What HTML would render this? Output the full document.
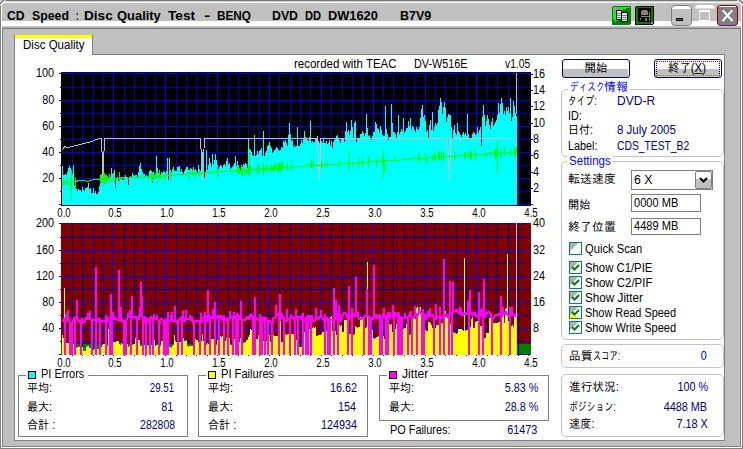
<!DOCTYPE html>
<html lang="ja"><head><meta charset="utf-8"><title>CD Speed : Disc Quality Test</title>
<style>
html,body{margin:0;padding:0}
body{width:743px;height:449px;position:relative;overflow:hidden;background:#c0c0c0;font-family:"Liberation Sans","IPAGothic",sans-serif;font-size:12px}
.a{position:absolute}
.t{position:absolute;white-space:pre;line-height:14px;height:14px;font-size:12px}
.gb{position:absolute;border:1px solid #c4c4c4;border-radius:5px;box-sizing:border-box}
.sb{position:absolute;border:1px solid #808080;box-sizing:border-box}
.wh{position:absolute;background:#fff}
.inp{position:absolute;border:1px solid #808080;box-sizing:border-box;background:#fff}
.cb{position:absolute;width:13px;height:13px;box-sizing:border-box;border:1px solid #008080;background:linear-gradient(135deg,#b0b0b0 0,#b0b0b0 36%,#fff 37%)}
.btn{position:absolute;box-sizing:border-box;border:1px solid #000080;border-radius:3px;background:linear-gradient(90deg,rgba(255,255,255,0) 0,rgba(255,255,255,0) 65px,#fff 65px),linear-gradient(#fff 0,#fff 9px,#c0c0c0 9px,#c0c0c0 100%)}
</style></head><body>
<!-- window frame -->
<div class="a" style="left:0;top:0;width:743px;height:449px;background:#808080"></div>
<div class="a" style="left:1px;top:1px;width:741px;height:447px;background:#fff"></div>
<div class="a" style="left:2px;top:28px;width:739px;height:419px;background:#808080"></div>
<div class="a" style="left:3px;top:3px;width:737px;height:443px;background:#c0c0c0"></div>
<div class="a" style="left:2px;top:3px;width:739px;height:18px;background:#c0c0c0"></div>
<div class="a" style="left:0;top:0;width:743px;height:1px;background:#787878"></div>
<div class="a" style="left:1px;top:1px;width:741px;height:1px;background:#d0d0d0"></div>
<!-- title bar bottom stripes -->
<div class="a" style="left:1px;top:21px;width:741px;height:5px;background:#fff"></div>
<div class="a" style="left:2px;top:26px;width:739px;height:1px;background:#c8c8c8"></div>
<div class="a" style="left:2px;top:27px;width:739px;height:1px;background:#b0b0b0"></div>
<div class="a" style="left:2px;top:28px;width:739px;height:1px;background:#787878"></div>
<svg class="a" style="left:0;top:0" width="6" height="6" viewBox="0 0 6 6"><path d="M0 0H5L0 5Z" fill="#d8d8d8"/><path d="M-0.5 4.5L4.5 -0.5" stroke="#707070" stroke-width="1.4" fill="none"/><path d="M0.5 5.5L5.5 0.5" stroke="#fff" stroke-width="1.4" fill="none"/></svg>
<svg class="a" style="left:737px;top:0" width="6" height="6" viewBox="0 0 6 6"><path d="M6 0H1L6 5Z" fill="#d8d8d8"/><path d="M6.5 4.5L1.5 -0.5" stroke="#707070" stroke-width="1.4" fill="none"/><path d="M5.5 5.5L0.5 0.5" stroke="#fff" stroke-width="1.4" fill="none"/></svg>
<!-- title icons -->
<svg class="a" style="left:612px;top:6px" width="19" height="19" viewBox="0 0 19 19" shape-rendering="crispEdges">
<rect x="0" y="0" width="19" height="19" rx="2" fill="#008000"/>
<path d="M1 1H18V2H14V3H11V4H5V15H4V16H3V14H1Z" fill="#00ff00"/>
<rect x="1" y="1" width="3" height="3" fill="#a0a0a0"/><rect x="4" y="2" width="7" height="1" fill="#909090"/><rect x="2" y="4" width="1" height="4" fill="#909090"/>
<rect x="4" y="4" width="6" height="10" fill="#000"/><rect x="5" y="5" width="4" height="8" fill="#e8e8e8"/>
<rect x="5" y="7" width="4" height="1" fill="#808080"/><rect x="5" y="9" width="4" height="1" fill="#808080"/><rect x="5" y="11" width="4" height="1" fill="#808080"/>
<rect x="9" y="6" width="7" height="10" fill="#000"/><rect x="10" y="7" width="5" height="8" fill="#e8e8e8"/>
<rect x="10" y="9" width="5" height="1" fill="#808080"/><rect x="10" y="11" width="5" height="1" fill="#808080"/><rect x="10" y="13" width="5" height="1" fill="#808080"/>
</svg>
<svg class="a" style="left:635px;top:6px" width="19" height="19" viewBox="0 0 19 19" shape-rendering="crispEdges">
<rect x="0" y="0" width="19" height="19" rx="2" fill="#000"/>
<rect x="1" y="1" width="17" height="17" fill="#008000"/>
<rect x="3" y="2" width="13" height="14" fill="#000"/>
<path d="M7 4H12V5H13V9H6V5H7Z" fill="#808080"/>
<rect x="6" y="10" width="8" height="1" fill="#808080"/><rect x="14" y="6" width="1" height="9" fill="#808080"/>
<rect x="5" y="12" width="1" height="2" fill="#808080"/><rect x="10" y="12" width="2" height="3" fill="#808080"/>
<rect x="16" y="16" width="2" height="2" fill="#909090"/>
</svg>
<!-- min -->
<div class="a" style="left:671px;top:5px;width:21px;height:21px;box-sizing:border-box;border:1px solid #808080;border-radius:4px;background:linear-gradient(#fff 0,#fff 3px,#c0c0c0 3.5px,#c0c0c0 100%)"></div>
<div class="a" style="left:676px;top:18px;width:7px;height:3px;box-sizing:border-box;border:1px solid #000;background:#606060"></div>
<!-- max (disabled) -->
<div class="a" style="left:695px;top:5px;width:20px;height:21px;box-sizing:border-box;border-radius:4px;background:linear-gradient(#fff 0,#fff 3px,#c0c0c0 4px,#c0c0c0 16px,#fff 16px,#fff 100%)"></div>
<div class="a" style="left:699px;top:10px;width:11px;height:11px;box-sizing:border-box;border:1px solid #fff;border-top:2px solid #fff;background:#c0c0c0"></div>
<!-- close -->
<div class="a" style="left:717px;top:5px;width:21px;height:21px;box-sizing:border-box;border:1px solid #800000;border-bottom:1px solid #800080;border-radius:4px;background:#808080"></div>
<div class="a" style="left:719px;top:6px;width:17px;height:1px;background:#fff"></div>
<svg class="a" style="left:717px;top:5px" width="21" height="21" viewBox="0 0 21 21"><path d="M5 4 L15 15 M16 4 L6 15" stroke="#202020" stroke-width="1" fill="none"/><path d="M5.5 5 L15.5 16 M15.5 5 L5.5 16" stroke="#fff" stroke-width="2" fill="none"/></svg>


<!-- tab panel -->
<div class="a" style="left:14px;top:54px;width:711px;height:387px;box-sizing:border-box;border:1px solid #808080;background:#fff"></div>
<div class="a" style="left:14px;top:35px;width:79px;height:20px;box-sizing:border-box;border-left:1px solid #808080;border-right:1px solid #808080;background:#fff"></div>
<div class="a" style="left:15px;top:35px;width:77px;height:3px;background:#ffff00"></div>
<!-- charts -->
<svg class="a" style="left:0;top:0" width="743" height="449" viewBox="0 0 743 449" shape-rendering="crispEdges">
<path fill="#000" d="M61 72h470v134h-470z"/>
<path fill="#0000ff" d="M62 73h468v1h-468z"/>
<path fill="#0000b8" d="M62 87h468v1h-468z"/>
<path fill="#0000ff" d="M62 100h468v1h-468z"/>
<path fill="#0000b8" d="M62 113h468v1h-468z"/>
<path fill="#0000ff" d="M62 126h468v1h-468z"/>
<path fill="#0000b8" d="M62 139h468v1h-468z"/>
<path fill="#0000ff" d="M62 152h468v1h-468z"/>
<path fill="#0000b8" d="M62 165h468v1h-468z"/>
<path fill="#0000ff" d="M62 178h468v1h-468z"/>
<path fill="#0000b8" d="M62 191h468v1h-468z"/>
<path fill="#0000ff" d="M62 204h468v1h-468z"/>
<path fill="#0000b8" d="M72 73h1v132h-1zM82 73h1v132h-1zM93 73h1v132h-1zM103 73h1v132h-1z"/>
<path fill="#0000ff" d="M113 73h1v132h-1z"/>
<path fill="#0000b8" d="M124 73h1v132h-1zM134 73h1v132h-1zM145 73h1v132h-1zM155 73h1v132h-1z"/>
<path fill="#0000ff" d="M165 73h1v132h-1z"/>
<path fill="#0000b8" d="M176 73h1v132h-1zM186 73h1v132h-1zM196 73h1v132h-1zM207 73h1v132h-1z"/>
<path fill="#0000ff" d="M217 73h1v132h-1z"/>
<path fill="#0000b8" d="M228 73h1v132h-1zM238 73h1v132h-1zM248 73h1v132h-1zM259 73h1v132h-1z"/>
<path fill="#0000ff" d="M269 73h1v132h-1z"/>
<path fill="#0000b8" d="M279 73h1v132h-1zM290 73h1v132h-1zM300 73h1v132h-1zM310 73h1v132h-1z"/>
<path fill="#0000ff" d="M321 73h1v132h-1z"/>
<path fill="#0000b8" d="M331 73h1v132h-1zM342 73h1v132h-1zM352 73h1v132h-1zM362 73h1v132h-1z"/>
<path fill="#0000ff" d="M373 73h1v132h-1z"/>
<path fill="#0000b8" d="M383 73h1v132h-1zM393 73h1v132h-1zM404 73h1v132h-1zM414 73h1v132h-1z"/>
<path fill="#0000ff" d="M425 73h1v132h-1z"/>
<path fill="#0000b8" d="M435 73h1v132h-1zM445 73h1v132h-1zM456 73h1v132h-1zM466 73h1v132h-1z"/>
<path fill="#0000ff" d="M476 73h1v132h-1z"/>
<path fill="#0000b8" d="M487 73h1v132h-1zM497 73h1v132h-1zM508 73h1v132h-1zM518 73h1v132h-1z"/>
<path fill="#0000ff" d="M59 73h2v1h-2zM60 87h1v1h-1zM59 100h2v1h-2zM60 113h1v1h-1zM59 126h2v1h-2zM60 139h1v1h-1zM59 152h2v1h-2zM60 165h1v1h-1zM59 178h2v1h-2zM60 191h1v1h-1zM59 204h2v1h-2zM529 204h4v1h-4zM529 196h2v1h-2zM529 188h4v1h-4zM529 180h2v1h-2zM529 172h4v1h-4zM529 164h2v1h-2zM529 155h4v1h-4zM529 147h2v1h-2zM529 139h4v1h-4zM529 131h2v1h-2zM529 123h4v1h-4zM529 114h2v1h-2zM529 106h4v1h-4zM529 98h2v1h-2zM529 90h4v1h-4zM529 82h2v1h-2zM529 74h4v1h-4zM72 205h1v1h-1zM82 205h1v1h-1zM93 205h1v1h-1zM103 205h1v1h-1zM113 205h1v1h-1zM124 205h1v1h-1zM134 205h1v1h-1zM145 205h1v1h-1zM155 205h1v1h-1zM165 205h1v1h-1zM176 205h1v1h-1zM186 205h1v1h-1zM196 205h1v1h-1zM207 205h1v1h-1zM217 205h1v1h-1zM228 205h1v1h-1zM238 205h1v1h-1zM248 205h1v1h-1zM259 205h1v1h-1zM269 205h1v1h-1zM279 205h1v1h-1zM290 205h1v1h-1zM300 205h1v1h-1zM310 205h1v1h-1zM321 205h1v1h-1zM331 205h1v1h-1zM342 205h1v1h-1zM352 205h1v1h-1zM362 205h1v1h-1zM373 205h1v1h-1zM383 205h1v1h-1zM393 205h1v1h-1zM404 205h1v1h-1zM414 205h1v1h-1zM425 205h1v1h-1zM435 205h1v1h-1zM445 205h1v1h-1zM456 205h1v1h-1zM466 205h1v1h-1zM476 205h1v1h-1zM487 205h1v1h-1zM497 205h1v1h-1zM508 205h1v1h-1zM518 205h1v1h-1zM528 205h1v1h-1z"/>
<path d="M62,205V166H63V175H64V175H65V174H66V175H67V172H68V168H69V166H70V168H71V172H72V174H73V165H74V186H75V188H76V189H77V191H78V189H79V190H80V190H81V192H82V187H83V190H84V191H85V188H86V188H87V187H88V183H89V189H90V188H91V193H92V193H93V188H94V193H95V191H96V194H97V194H98V192H99V186H100V183H101V179H102V178H103V180H104V178H105V177H106V179H107V179H108V178H109V177H110V177H111V168H112V174H113V173H114V170H115V188H116V179H117V177H118V181H119V177H120V179H121V178H122V180H123V180H124V177H125V175H126V177H127V177H128V185H129V177H130V176H131V177H132V173H133V175H134V176H135V175H136V175H137V178H138V172H139V166H140V163H141V169H142V172H143V174H144V174H145V177H146V175H147V177H148V178H149V171H150V170H151V171H152V183H153V172H154V175H155V176H156V156H157V168H158V173H159V170H160V175H161V174H162V173H163V171H164V172H165V174H166V171H167V158H168V180H169V158H170V170H171V172H172V169H173V167H174V171H175V171H176V171H177V167H178V167H179V166H180V172H181V169H182V172H183V174H184V171H185V169H186V167H187V167H188V170H189V170H190V168H191V169H192V170H193V167H194V171H195V169H196V171H197V173H198V165H199V172H200V171H201V168H202V152H203V169H204V178H205V173H206V150H207V170H208V165H209V158H210V163H211V167H212V154H213V164H214V160H215V154H216V160H217V165H218V169H219V167H220V165H221V166H222V168H223V165H224V164H225V166H226V161H227V158H228V165H229V163H230V169H231V168H232V167H233V165H234V163H235V156H236V166H237V161H238V166H239V170H240V170H241V166H242V167H243V164H244V165H245V163H246V164H247V168H248V138H249V149H250V150H251V152H252V155H253V156H254V135H255V156H256V155H257V151H258V154H259V151H260V150H261V148H262V156H263V131H264V156H265V153H266V151H267V146H268V145H269V142H270V146H271V148H272V153H273V152H274V150H275V149H276V147H277V148H278V150H279V151H280V150H281V147H282V148H283V141H284V142H285V140H286V143H287V146H288V135H289V123H290V134H291V141H292V140H293V147H294V145H295V147H296V146H297V127H298V146H299V146H300V144H301V140H302V143H303V139H304V131H305V137H306V139H307V140H308V141H309V137H310V121H311V142H312V141H313V143H314V142H315V139H316V139H317V136H318V141H319V143H320V141H321V141H322V143H323V139H324V143H325V143H326V141H327V144H328V143H329V140H330V146H331V141H332V148H333V142H334V140H335V138H336V136H337V135H338V139H339V140H340V143H341V138H342V138H343V139H344V142H345V131H346V122H347V132H348V130H349V135H350V131H351V120H352V127H353V139H354V123H355V121H356V142H357V139H358V138H359V139H360V134H361V134H362V131H363V133H364V136H365V133H366V114H367V128H368V136H369V135H370V138H371V140H372V136H373V132H374V132H375V122H376V124H377V128H378V129H379V133H380V126H381V130H382V135H383V136H384V136H385V106H386V129H387V134H388V140H389V137H390V137H391V104H392V123H393V132H394V132H395V134H396V138H397V132H398V115H399V134H400V132H401V129H402V131H403V118H404V133H405V131H406V128H407V128H408V121H409V126H410V118H411V130H412V126H413V127H414V130H415V132H416V127H417V129H418V130H419V127H420V118H421V109H422V105H423V117H424V115H425V121H426V132H427V130H428V138H429V125H430V120H431V130H432V112H433V131H434V127H435V123H436V125H437V123H438V110H439V106H440V98H441V102H442V114H443V107H444V102H445V108H446V122H447V117H448V114H449V115H450V115H451V127H452V138H453V130H454V125H455V133H456V135H457V123H458V131H459V133H460V135H461V137H462V134H463V132H464V135H465V133H466V136H467V114H468V134H469V138H470V138H471V139H472V134H473V132H474V133H475V135H476V134H477V127H478V133H479V130H480V127H481V146H482V117H483V105H484V115H485V126H486V121H487V115H488V119H489V125H490V129H491V122H492V118H493V126H494V124H495V122H496V120H497V115H498V103H499V113H500V104H501V98H502V103H503V114H504V111H505V115H506V107H507V111H508V107H509V113H510V98H511V121H512V117H513V101H514V106H515V113H516V116H517V205Z" fill="#00ffff"/>
<path d="M62,150 L63,149 L64,147.5 L65,146.5 L66.5,147.5 L68,147.5 L72,146.5 L80,144.5 L90,142 L98,139 L101,138.5 L101.5,138.5 L103,178.5 L104.5,138.5 H200.5 L202.5,180 L204.5,138.5 H317.5 L319.5,180 L321,138.5 H447.5 L449.5,180 L451,138.5 H513" fill="none" stroke="#c0c0c0" stroke-width="1"/>
<path fill="#c0c0c0" d="M516 73h1v41h-1z"/>
<polyline points="62.5,182.0 63.5,182.1 64.5,182.2 65.5,182.6 66.5,182.6 67.5,182.8 68.5,182.5 69.5,182.4 70.5,182.1 71.5,181.5 72.5,181.5 73.5,181.3 74.5,181.4 75.5,181.4 76.5,181.3 77.5,181.1 78.5,180.5 79.5,180.6 80.5,180.4 81.5,180.1 82.5,180.2 83.5,180.4 84.5,180.7 85.5,180.9 86.5,181.1 87.5,181.2 88.5,181.1 89.5,180.6 90.5,180.6 91.5,180.1 92.5,179.9 93.5,179.8 94.5,179.8 95.5,179.9 96.5,179.9 97.5,179.8 98.5,179.7 99.5,179.6 100.5,179.7 101.5,179.6 102.5,179.3 103.5,179.3 104.5,179.0 105.5,178.9 106.5,178.6 107.5,178.5 108.5,178.6 109.5,178.3 110.5,178.2 111.5,178.3 112.5,178.2 113.5,178.1 114.5,178.2 115.5,178.4 116.5,178.5 117.5,178.1 118.5,178.1 119.5,178.0 120.5,177.8 121.5,177.6 122.5,177.7 123.5,178.0 124.5,178.0 125.5,178.1 126.5,178.2 127.5,178.2 128.5,178.1 129.5,177.8 130.5,177.8 131.5,177.9 132.5,177.9 133.5,177.9 134.5,177.5 135.5,177.5 136.5,177.3 137.5,177.3 138.5,177.1 139.5,177.1 140.5,177.1 141.5,177.3 142.5,177.5 143.5,177.2 144.5,177.0 145.5,176.8 146.5,177.0 147.5,176.7 148.5,176.3 149.5,176.2 150.5,176.2 151.5,176.4 152.5,175.8 153.5,175.9 154.5,175.9 155.5,176.0 156.5,175.8 157.5,175.7 158.5,176.1 159.5,176.2 160.5,176.2 161.5,176.0 162.5,176.0 163.5,176.1 164.5,175.7 165.5,175.7 166.5,175.7 167.5,175.6 168.5,175.6 169.5,175.3 170.5,175.6 171.5,175.3 172.5,175.1 173.5,175.2 174.5,175.2 175.5,175.0 176.5,174.6 177.5,174.4 178.5,174.5 179.5,174.3 180.5,174.1 181.5,174.4 182.5,174.6 183.5,174.5 184.5,174.3 185.5,174.5 186.5,174.5 187.5,174.1 188.5,173.9 189.5,174.0 190.5,173.8 191.5,173.5 192.5,173.6 193.5,173.8 194.5,173.8 195.5,173.5 196.5,173.7 197.5,173.7 198.5,173.6 199.5,173.0 200.5,173.1 201.5,173.4 202.5,172.9 203.5,172.9 204.5,173.0 205.5,172.8 206.5,172.5 207.5,172.3 208.5,172.4 209.5,172.2 210.5,172.1 211.5,172.0 212.5,172.3 213.5,172.0 214.5,172.0 215.5,171.8 216.5,171.5 217.5,171.7 218.5,171.6 219.5,171.7 220.5,171.4 221.5,171.5 222.5,171.5 223.5,171.6 224.5,171.6 225.5,171.3 226.5,171.3 227.5,171.2 228.5,170.9 229.5,170.6 230.5,170.4 231.5,170.5 232.5,170.4 233.5,170.6 234.5,170.9 235.5,171.0 236.5,170.9 237.5,171.0 238.5,170.7 239.5,170.4 240.5,170.4 241.5,170.4 242.5,170.4 243.5,170.5 244.5,170.6 245.5,170.7 246.5,170.8 247.5,170.5 248.5,170.5 249.5,170.2 250.5,170.0 251.5,169.8 252.5,169.4 253.5,169.4 254.5,169.3 255.5,169.3 256.5,169.5 257.5,169.4 258.5,169.3 259.5,169.3 260.5,169.3 261.5,168.9 262.5,169.0 263.5,168.8 264.5,169.0 265.5,168.6 266.5,168.5 267.5,168.5 268.5,168.5 269.5,168.6 270.5,168.5 271.5,168.6 272.5,168.4 273.5,168.4 274.5,168.1 275.5,168.1 276.5,167.9 277.5,167.8 278.5,167.6 279.5,167.8 280.5,167.7 281.5,167.3 282.5,167.3 283.5,167.5 284.5,167.8 285.5,167.8 286.5,168.1 287.5,168.2 288.5,168.1 289.5,167.7 290.5,167.4 291.5,167.3 292.5,166.9 293.5,166.7 294.5,166.7 295.5,166.6 296.5,166.4 297.5,166.1 298.5,166.5 299.5,166.5 300.5,166.5 301.5,166.8 302.5,166.7 303.5,166.6 304.5,166.1 305.5,165.9 306.5,165.6 307.5,165.0 308.5,164.9 309.5,164.9 310.5,165.0 311.5,164.9 312.5,165.0 313.5,165.2 314.5,165.3 315.5,165.4 316.5,165.4 317.5,165.6 318.5,165.5 319.5,165.4 320.5,165.3 321.5,165.3 322.5,165.0 323.5,164.8 324.5,164.9 325.5,164.8 326.5,164.8 327.5,164.5 328.5,164.6 329.5,164.8 330.5,164.6 331.5,164.8 332.5,164.9 333.5,164.8 334.5,164.9 335.5,164.7 336.5,164.6 337.5,164.4 338.5,164.0 339.5,163.7 340.5,163.7 341.5,163.4 342.5,163.2 343.5,163.2 344.5,163.3 345.5,163.7 346.5,163.4 347.5,163.6 348.5,163.6 349.5,163.4 350.5,163.6 351.5,163.5 352.5,163.6 353.5,163.4 354.5,163.4 355.5,163.5 356.5,163.2 357.5,163.1 358.5,162.8 359.5,162.9 360.5,162.7 361.5,162.5 362.5,162.4 363.5,162.3 364.5,162.2 365.5,162.2 366.5,162.4 367.5,162.0 368.5,161.8 369.5,161.7 370.5,161.7 371.5,161.5 372.5,161.4 373.5,161.7 374.5,161.9 375.5,161.9 376.5,161.8 377.5,161.9 378.5,161.7 379.5,161.4 380.5,161.4 381.5,161.2 382.5,161.1 383.5,160.7 384.5,160.5 385.5,160.3 386.5,160.3 387.5,160.3 388.5,160.3 389.5,160.2 390.5,160.2 391.5,160.4 392.5,160.3 393.5,160.1 394.5,160.1 395.5,160.2 396.5,160.3 397.5,160.3 398.5,160.4 399.5,160.3 400.5,160.1 401.5,160.0 402.5,159.8 403.5,159.5 404.5,159.0 405.5,159.2 406.5,159.6 407.5,159.3 408.5,159.3 409.5,159.1 410.5,159.0 411.5,158.8 412.5,158.5 413.5,158.2 414.5,158.0 415.5,157.9 416.5,158.2 417.5,158.2 418.5,158.1 419.5,158.3 420.5,158.3 421.5,158.3 422.5,158.3 423.5,158.3 424.5,158.3 425.5,158.3 426.5,158.3 427.5,158.3 428.5,157.8 429.5,157.4 430.5,157.4 431.5,157.3 432.5,157.1 433.5,157.2 434.5,157.4 435.5,157.5 436.5,157.2 437.5,157.1 438.5,157.1 439.5,156.8 440.5,156.6 441.5,156.4 442.5,156.7 443.5,156.6 444.5,156.7 445.5,156.7 446.5,156.7 447.5,156.9 448.5,156.6 449.5,156.4 450.5,156.3 451.5,156.4 452.5,156.3 453.5,156.3 454.5,156.2 455.5,156.4 456.5,156.3 457.5,155.9 458.5,155.9 459.5,155.8 460.5,155.7 461.5,155.5 462.5,155.4 463.5,155.7 464.5,155.3 465.5,155.3 466.5,155.4 467.5,155.4 468.5,155.4 469.5,155.2 470.5,155.1 471.5,155.0 472.5,154.8 473.5,154.9 474.5,154.9 475.5,154.9 476.5,154.9 477.5,154.8 478.5,154.9 479.5,154.8 480.5,154.4 481.5,154.4 482.5,154.4 483.5,154.3 484.5,154.0 485.5,154.0 486.5,154.0 487.5,154.0 488.5,153.8 489.5,153.7 490.5,153.8 491.5,153.8 492.5,153.6 493.5,153.4 494.5,153.6 495.5,153.7 496.5,153.3 497.5,153.2 498.5,153.3 499.5,153.1 500.5,152.7 501.5,152.6 502.5,152.6 503.5,152.5 504.5,152.4 505.5,152.5 506.5,152.5 507.5,152.6 508.5,152.5 509.5,152.4 510.5,152.2 511.5,152.0 512.5,152.2 513.5,152.1 514.5,152.1 515.5,152.2 516.5,152.3" fill="none" stroke="#00ff00" stroke-width="1"/>
<path fill="#00ff00" d="M63 178h1v8h-1zM64 180h1v5h-1zM67 177h1v8h-1zM70 177h1v10h-1zM75 178h1v9h-1zM100 175h1v7h-1zM101 174h1v8h-1zM103 173h1v12h-1zM104 173h1v12h-1zM105 175h1v7h-1zM106 175h1v8h-1zM107 176h1v7h-1zM109 174h1v7h-1zM113 174h1v8h-1zM119 172h1v11h-1zM151 173h1v8h-1zM152 172h1v9h-1zM153 174h1v6h-1zM155 173h1v6h-1zM156 171h1v8h-1zM159 171h1v8h-1zM161 172h1v8h-1zM165 173h1v9h-1zM170 172h1v9h-1zM189 172h1v7h-1zM192 170h1v6h-1zM194 170h1v9h-1zM199 169h1v7h-1zM217 166h1v12h-1zM237 167h1v8h-1zM238 165h1v8h-1zM239 168h1v6h-1zM241 165h1v11h-1zM242 168h1v8h-1zM244 168h1v8h-1zM246 168h1v7h-1zM248 166h1v8h-1zM250 166h1v6h-1zM257 165h1v9h-1zM259 164h1v10h-1zM263 163h1v12h-1zM265 165h1v7h-1zM267 164h1v9h-1zM270 164h1v9h-1zM271 165h1v6h-1zM273 165h1v7h-1zM274 164h1v6h-1zM275 163h1v8h-1zM277 165h1v7h-1zM278 162h1v11h-1zM279 164h1v8h-1zM280 164h1v6h-1zM281 162h1v10h-1zM282 161h1v9h-1zM287 163h1v8h-1zM291 161h1v10h-1zM311 159h1v9h-1zM313 161h1v9h-1zM321 161h1v7h-1zM326 160h1v9h-1zM339 159h1v8h-1zM352 162h1v5h-1zM358 157h1v10h-1zM362 158h1v9h-1zM368 156h1v12h-1zM376 159h1v9h-1zM382 156h1v9h-1zM395 156h1v6h-1zM418 155h1v6h-1zM419 153h1v9h-1zM425 153h1v8h-1zM427 156h1v8h-1zM432 154h1v7h-1zM434 152h1v8h-1zM435 155h1v6h-1zM438 151h1v8h-1zM439 153h1v7h-1zM441 151h1v9h-1zM443 151h1v11h-1zM454 151h1v8h-1zM464 152h1v7h-1zM465 152h1v6h-1zM468 151h1v7h-1zM470 152h1v8h-1zM471 151h1v7h-1zM475 149h1v12h-1zM485 151h1v6h-1zM491 151h1v5h-1zM494 150h1v6h-1zM495 149h1v10h-1zM496 149h1v8h-1zM497 151h1v7h-1zM500 148h1v10h-1zM504 147h1v9h-1zM510 150h1v6h-1zM514 147h1v9h-1zM515 148h1v9h-1zM516 147h1v8h-1zM71 170h1v31h-1zM383 150h1v28h-1zM384 160h1v13h-1zM497 142h1v31h-1zM249 152h1v25h-1zM349 150h1v21h-1z"/>
<path fill="#800000" d="M61 223h470v132h-470z"/>
<path fill="#008000" d="M61 344h470v11h-470z"/>
<path fill="#0000ff" d="M62 223h468v1h-468z"/>
<path fill="#000090" d="M62 237h468v1h-468z"/>
<path fill="#0000ff" d="M62 250h468v1h-468z"/>
<path fill="#000090" d="M62 263h468v1h-468z"/>
<path fill="#0000ff" d="M62 276h468v1h-468z"/>
<path fill="#000090" d="M62 289h468v1h-468z"/>
<path fill="#0000ff" d="M62 302h468v1h-468z"/>
<path fill="#000090" d="M62 315h468v1h-468z"/>
<path fill="#0000ff" d="M62 328h468v1h-468z"/>
<path fill="#000090" d="M62 341h468v1h-468z"/>
<path fill="#0000ff" d="M62 354h468v1h-468z"/>
<path fill="#000090" d="M72 223h1v132h-1zM82 223h1v132h-1zM93 223h1v132h-1zM103 223h1v132h-1z"/>
<path fill="#0000ff" d="M113 223h1v132h-1z"/>
<path fill="#000090" d="M124 223h1v132h-1zM134 223h1v132h-1zM145 223h1v132h-1zM155 223h1v132h-1z"/>
<path fill="#0000ff" d="M165 223h1v132h-1z"/>
<path fill="#000090" d="M176 223h1v132h-1zM186 223h1v132h-1zM196 223h1v132h-1zM207 223h1v132h-1z"/>
<path fill="#0000ff" d="M217 223h1v132h-1z"/>
<path fill="#000090" d="M228 223h1v132h-1zM238 223h1v132h-1zM248 223h1v132h-1zM259 223h1v132h-1z"/>
<path fill="#0000ff" d="M269 223h1v132h-1z"/>
<path fill="#000090" d="M279 223h1v132h-1zM290 223h1v132h-1zM300 223h1v132h-1zM310 223h1v132h-1z"/>
<path fill="#0000ff" d="M321 223h1v132h-1z"/>
<path fill="#000090" d="M331 223h1v132h-1zM342 223h1v132h-1zM352 223h1v132h-1zM362 223h1v132h-1z"/>
<path fill="#0000ff" d="M373 223h1v132h-1z"/>
<path fill="#000090" d="M383 223h1v132h-1zM393 223h1v132h-1zM404 223h1v132h-1zM414 223h1v132h-1z"/>
<path fill="#0000ff" d="M425 223h1v132h-1z"/>
<path fill="#000090" d="M435 223h1v132h-1zM445 223h1v132h-1zM456 223h1v132h-1zM466 223h1v132h-1z"/>
<path fill="#0000ff" d="M476 223h1v132h-1z"/>
<path fill="#000090" d="M487 223h1v132h-1zM497 223h1v132h-1zM508 223h1v132h-1zM518 223h1v132h-1z"/>
<path fill="#0000ff" d="M59 223h2v1h-2zM60 237h1v1h-1zM59 250h2v1h-2zM60 263h1v1h-1zM59 276h2v1h-2zM60 289h1v1h-1zM59 302h2v1h-2zM60 315h1v1h-1zM59 328h2v1h-2zM60 341h1v1h-1zM59 354h2v1h-2zM72 355h1v1h-1zM82 355h1v1h-1zM93 355h1v1h-1zM103 355h1v1h-1zM113 355h1v1h-1zM124 355h1v1h-1zM134 355h1v1h-1zM145 355h1v1h-1zM155 355h1v1h-1zM165 355h1v1h-1zM176 355h1v1h-1zM186 355h1v1h-1zM196 355h1v1h-1zM207 355h1v1h-1zM217 355h1v1h-1zM228 355h1v1h-1zM238 355h1v1h-1zM248 355h1v1h-1zM259 355h1v1h-1zM269 355h1v1h-1zM279 355h1v1h-1zM290 355h1v1h-1zM300 355h1v1h-1zM310 355h1v1h-1zM321 355h1v1h-1zM331 355h1v1h-1zM342 355h1v1h-1zM352 355h1v1h-1zM362 355h1v1h-1zM373 355h1v1h-1zM383 355h1v1h-1zM393 355h1v1h-1zM404 355h1v1h-1zM414 355h1v1h-1zM425 355h1v1h-1zM435 355h1v1h-1zM445 355h1v1h-1zM456 355h1v1h-1zM466 355h1v1h-1zM476 355h1v1h-1zM487 355h1v1h-1zM497 355h1v1h-1zM508 355h1v1h-1zM518 355h1v1h-1zM528 355h1v1h-1z"/>
<path d="M62,355V335H63V338H64V288H65V315H66V343H67V343H68V343H69V344H70V332H71V333H72V332H73V344H74V348H75V347H76V348H77V347H78V347H79V347H80V347H81V347H82V347H83V351H84V351H85V351H86V347H87V346H88V346H89V348H90V348H91V347H92V348H93V350H94V349H95V348H96V348H97V349H98V349H99V349H100V349H101V347H102V345H103V344H104V344H105V345H106V346H107V346H108V329H109V328H110V328H111V343H112V342H113V342H114V342H115V342H116V341H117V341H118V341H119V344H120V345H121V343H122V344H123V342H124V343H125V345H126V344H127V344H128V347H129V346H130V335H131V345H132V345H133V344H134V344H135V338H136V339H137V340H138V340H139V340H140V346H141V346H142V345H143V345H144V345H145V345H146V346H147V345H148V346H149V346H150V346H151V345H152V345H153V340H154V340H155V346H156V345H157V345H158V344H159V344H160V346H161V341H162V341H163V342H164V341H165V343H166V343H167V346H168V341H169V347H170V347H171V348H172V346H173V345H174V335H175V341H176V342H177V341H178V342H179V342H180V342H181V342H182V338H183V338H184V341H185V341H186V340H187V346H188V347H189V346H190V346H191V346H192V346H193V346H194V340H195V339H196V340H197V340H198V342H199V342H200V341H201V341H202V334H203V341H204V341H205V344H206V345H207V343H208V344H209V344H210V339H211V339H212V339H213V339H214V346H215V346H216V345H217V340H218V339H219V339H220V336H221V337H222V336H223V340H224V340H225V341H226V338H227V338H228V338H229V338H230V345H231V345H232V345H233V339H234V339H235V339H236V339H237V342H238V341H239V342H240V338H241V338H242V338H243V343H244V342H245V342H246V340H247V340H248V337H249V335H250V329H251V330H252V329H253V323H254V324H255V340H256V339H257V339H258V335H259V326H260V326H261V330H262V330H263V341H264V341H265V340H266V341H267V341H268V335H269V335H270V342H271V332H272V332H273V335H274V336H275V336H276V336H277V336H278V320H279V320H280V321H281V342H282V342H283V342H284V342H285V334H286V335H287V334H288V334H289V334H290V334H291V334H292V334H293V334H294V341H295V341H296V340H297V347H298V347H299V347H300V347H301V347H302V332H303V332H304V332H305V330H306V328H307V329H308V329H309V329H310V330H311V330H312V328H313V327H314V328H315V327H316V336H317V336H318V335H319V335H320V335H321V334H322V332H323V332H324V331H325V332H326V331H327V333H328V334H329V334H330V317H331V316H332V331H333V332H334V331H335V331H336V335H337V336H338V326H339V325H340V326H341V325H342V332H343V332H344V320H345V320H346V320H347V335H348V334H349V334H350V334H351V334H352V334H353V335H354V334H355V326H356V327H357V328H358V327H359V327H360V317H361V318H362V317H363V319H364V318H365V328H366V327H367V262H368V336H369V335H370V329H371V330H372V330H373V338H374V339H375V338H376V337H377V337H378V336H379V337H380V337H381V333H382V335H383V336H384V339H385V338H386V339H387V322H388V321H389V324H390V325H391V324H392V332H393V331H394V330H395V329H396V324H397V324H398V324H399V323H400V324H401V330H402V330H403V329H404V328H405V328H406V324H407V325H408V324H409V335H410V334H411V335H412V319H413V319H414V318H415V319H416V308H417V307H418V309H419V307H420V307H421V322H422V321H423V331H424V331H425V330H426V331H427V331H428V322H429V322H430V323H431V325H432V328H433V328H434V327H435V328H436V325H437V325H438V325H439V325H440V324H441V323H442V323H443V323H444V323H445V311H446V317H447V318H448V320H449V321H450V324H451V336H452V338H453V332H454V333H455V333H456V334H457V333H458V329H459V329H460V329H461V329H462V330H463V331H464V258H465V331H466V330H467V330H468V331H469V329H470V327H471V319H472V317H473V328H474V328H475V322H476V321H477V321H478V335H479V326H480V326H481V326H482V325H483V325H484V338H485V338H486V333H487V333H488V333H489V318H490V317H491V318H492V318H493V323H494V323H495V323H496V323H497V323H498V322H499V322H500V323H501V323H502V312H503V313H504V323H505V309H506V308H507V254H508V321H509V321H510V321H511V326H512V325H513V327H514V316H515V316H516V316H517V355Z" fill="#ffff00"/>
<path fill="#ff00ff" d="M62 320h2v2h-2zM63 318h2v3h-2zM64 318h2v37h-2zM65 316h2v3h-2zM66 312h2v9h-2zM67 310h2v11h-2zM68 317h2v5h-2zM69 322h2v33h-2zM70 322h2v33h-2zM71 322h2v33h-2zM72 320h2v2h-2zM73 317h2v3h-2zM74 317h2v38h-2zM75 316h2v2h-2zM76 300h2v19h-2zM77 319h2v2h-2zM78 320h2v2h-2zM79 320h2v3h-2zM80 323h2v32h-2zM81 318h2v6h-2zM82 321h2v2h-2zM83 321h2v2h-2zM84 318h2v4h-2zM85 317h2v2h-2zM86 318h2v2h-2zM87 313h2v6h-2zM88 318h2v2h-2zM89 311h2v8h-2zM90 318h2v2h-2zM91 319h2v36h-2zM92 319h2v2h-2zM93 319h2v2h-2zM94 319h2v2h-2zM95 267h2v88h-2zM96 320h2v2h-2zM97 318h2v3h-2zM98 318h2v4h-2zM99 318h2v37h-2zM100 320h2v2h-2zM101 320h2v2h-2zM102 320h2v2h-2zM103 320h2v2h-2zM104 321h2v2h-2zM105 315h2v40h-2zM106 321h2v2h-2zM107 317h2v5h-2zM108 320h2v2h-2zM109 320h2v35h-2zM110 294h2v26h-2zM111 316h2v39h-2zM112 312h2v6h-2zM113 318h2v2h-2zM114 316h2v3h-2zM115 318h2v2h-2zM116 319h2v2h-2zM117 319h2v2h-2zM118 270h2v51h-2zM119 317h2v4h-2zM120 307h2v11h-2zM121 318h2v4h-2zM122 321h2v2h-2zM123 320h2v35h-2zM124 320h2v2h-2zM125 319h2v36h-2zM126 318h2v2h-2zM127 313h2v5h-2zM128 316h2v2h-2zM129 310h2v8h-2zM130 317h2v38h-2zM131 296h2v23h-2zM132 316h2v2h-2zM133 316h2v2h-2zM134 316h2v2h-2zM135 316h2v3h-2zM136 317h2v38h-2zM137 317h2v3h-2zM138 315h2v5h-2zM139 307h2v8h-2zM140 282h2v35h-2zM141 296h2v21h-2zM142 316h2v39h-2zM143 316h2v4h-2zM144 320h2v3h-2zM145 317h2v38h-2zM146 321h2v2h-2zM147 319h2v3h-2zM148 322h2v2h-2zM149 317h2v38h-2zM150 316h2v2h-2zM151 317h2v2h-2zM152 317h2v38h-2zM153 314h2v3h-2zM154 317h2v2h-2zM155 318h2v2h-2zM156 315h2v5h-2zM157 319h2v2h-2zM158 320h2v35h-2zM159 320h2v4h-2zM160 318h2v2h-2zM161 318h2v2h-2zM162 320h2v2h-2zM163 320h2v35h-2zM164 319h2v2h-2zM165 319h2v36h-2zM166 318h2v2h-2zM167 312h2v43h-2zM168 320h2v2h-2zM169 320h2v2h-2zM170 315h2v6h-2zM171 312h2v8h-2zM172 320h2v2h-2zM173 320h2v2h-2zM174 306h2v15h-2zM175 321h2v2h-2zM176 322h2v2h-2zM177 320h2v35h-2zM178 319h2v2h-2zM179 318h2v2h-2zM180 317h2v2h-2zM181 316h2v39h-2zM182 311h2v7h-2zM183 318h2v4h-2zM184 319h2v3h-2zM185 310h2v9h-2zM186 318h2v2h-2zM187 318h2v2h-2zM188 318h2v2h-2zM189 315h2v5h-2zM190 319h2v2h-2zM191 316h2v5h-2zM192 320h2v4h-2zM193 322h2v33h-2zM194 321h2v2h-2zM195 320h2v2h-2zM196 320h2v2h-2zM197 320h2v2h-2zM198 320h2v2h-2zM199 320h2v35h-2zM200 313h2v10h-2zM201 319h2v4h-2zM202 317h2v2h-2zM203 316h2v2h-2zM204 312h2v43h-2zM205 316h2v3h-2zM206 319h2v3h-2zM207 290h2v32h-2zM208 314h2v4h-2zM209 317h2v38h-2zM210 316h2v2h-2zM211 316h2v3h-2zM212 309h2v10h-2zM213 316h2v2h-2zM214 302h2v53h-2zM215 317h2v2h-2zM216 316h2v2h-2zM217 315h2v2h-2zM218 316h2v39h-2zM219 315h2v4h-2zM220 315h2v2h-2zM221 316h2v4h-2zM222 319h2v2h-2zM223 315h2v40h-2zM224 318h2v2h-2zM225 319h2v2h-2zM226 318h2v2h-2zM227 318h2v37h-2zM228 319h2v2h-2zM229 311h2v8h-2zM230 317h2v2h-2zM231 316h2v2h-2zM232 316h2v39h-2zM233 312h2v4h-2zM234 315h2v3h-2zM235 316h2v39h-2zM236 313h2v3h-2zM237 315h2v40h-2zM238 315h2v3h-2zM239 318h2v2h-2zM240 301h2v19h-2zM241 320h2v35h-2zM242 319h2v2h-2zM243 319h2v2h-2zM244 319h2v2h-2zM245 318h2v2h-2zM246 316h2v3h-2zM247 316h2v2h-2zM248 318h2v2h-2zM249 314h2v5h-2zM250 314h2v2h-2zM251 315h2v2h-2zM252 315h2v40h-2zM253 315h2v2h-2zM254 297h2v58h-2zM255 317h2v2h-2zM256 318h2v2h-2zM257 319h2v2h-2zM258 319h2v2h-2zM259 314h2v41h-2zM260 317h2v2h-2zM261 317h2v38h-2zM262 317h2v3h-2zM263 320h2v2h-2zM264 317h2v38h-2zM265 317h2v3h-2zM266 319h2v2h-2zM267 320h2v35h-2zM268 320h2v2h-2zM269 320h2v2h-2zM270 322h2v2h-2zM271 323h2v32h-2zM272 318h2v6h-2zM273 317h2v2h-2zM274 317h2v2h-2zM275 305h2v12h-2zM276 313h2v3h-2zM277 315h2v2h-2zM278 312h2v43h-2zM279 294h2v25h-2zM280 318h2v2h-2zM281 313h2v6h-2zM282 316h2v3h-2zM283 317h2v38h-2zM284 320h2v2h-2zM285 320h2v2h-2zM286 309h2v12h-2zM287 318h2v2h-2zM288 318h2v2h-2zM289 318h2v37h-2zM290 314h2v4h-2zM291 316h2v2h-2zM292 316h2v3h-2zM293 318h2v2h-2zM294 319h2v36h-2zM295 309h2v10h-2zM296 316h2v4h-2zM297 318h2v37h-2zM298 316h2v2h-2zM299 316h2v2h-2zM300 318h2v2h-2zM301 315h2v5h-2zM302 313h2v42h-2zM303 320h2v2h-2zM304 320h2v2h-2zM305 317h2v38h-2zM306 316h2v2h-2zM307 315h2v40h-2zM308 315h2v2h-2zM309 316h2v4h-2zM310 318h2v37h-2zM311 315h2v5h-2zM312 320h2v2h-2zM313 320h2v2h-2zM314 319h2v2h-2zM315 308h2v11h-2zM316 317h2v2h-2zM317 318h2v2h-2zM318 317h2v2h-2zM319 316h2v2h-2zM320 310h2v7h-2zM321 316h2v2h-2zM322 318h2v2h-2zM323 320h2v2h-2zM324 314h2v41h-2zM325 318h2v3h-2zM326 317h2v2h-2zM327 318h2v37h-2zM328 318h2v2h-2zM329 318h2v37h-2zM330 319h2v2h-2zM331 319h2v2h-2zM332 320h2v3h-2zM333 288h2v67h-2zM334 318h2v2h-2zM335 300h2v20h-2zM336 318h2v2h-2zM337 313h2v42h-2zM338 305h2v15h-2zM339 314h2v8h-2zM340 319h2v3h-2zM341 316h2v3h-2zM342 314h2v2h-2zM343 312h2v2h-2zM344 312h2v2h-2zM345 313h2v2h-2zM346 314h2v4h-2zM347 318h2v37h-2zM348 286h2v34h-2zM349 316h2v2h-2zM350 315h2v2h-2zM351 308h2v47h-2zM352 313h2v4h-2zM353 314h2v2h-2zM354 315h2v2h-2zM355 277h2v40h-2zM356 315h2v2h-2zM357 312h2v6h-2zM358 318h2v2h-2zM359 318h2v2h-2zM360 318h2v2h-2zM361 317h2v2h-2zM362 317h2v2h-2zM363 316h2v39h-2zM364 315h2v2h-2zM365 315h2v2h-2zM366 289h2v27h-2zM367 315h2v2h-2zM368 316h2v39h-2zM369 318h2v3h-2zM370 317h2v38h-2zM371 317h2v2h-2zM372 318h2v2h-2zM373 265h2v53h-2zM374 314h2v3h-2zM375 314h2v5h-2zM376 315h2v4h-2zM377 315h2v3h-2zM378 317h2v2h-2zM379 314h2v41h-2zM380 317h2v2h-2zM381 317h2v38h-2zM382 313h2v4h-2zM383 308h2v10h-2zM384 315h2v3h-2zM385 315h2v40h-2zM386 317h2v2h-2zM387 312h2v43h-2zM388 312h2v7h-2zM389 312h2v7h-2zM390 315h2v2h-2zM391 315h2v2h-2zM392 305h2v13h-2zM393 315h2v40h-2zM394 312h2v3h-2zM395 314h2v2h-2zM396 315h2v2h-2zM397 312h2v43h-2zM398 313h2v6h-2zM399 316h2v39h-2zM400 317h2v2h-2zM401 317h2v38h-2zM402 317h2v2h-2zM403 317h2v2h-2zM404 313h2v4h-2zM405 317h2v2h-2zM406 316h2v2h-2zM407 316h2v39h-2zM408 315h2v2h-2zM409 312h2v4h-2zM410 311h2v7h-2zM411 318h2v37h-2zM412 317h2v2h-2zM413 316h2v2h-2zM414 306h2v10h-2zM415 313h2v2h-2zM416 313h2v42h-2zM417 313h2v3h-2zM418 307h2v6h-2zM419 311h2v2h-2zM420 312h2v2h-2zM421 313h2v42h-2zM422 309h2v5h-2zM423 314h2v41h-2zM424 317h2v3h-2zM425 314h2v6h-2zM426 314h2v4h-2zM427 311h2v7h-2zM428 313h2v4h-2zM429 308h2v9h-2zM430 315h2v2h-2zM431 314h2v3h-2zM432 314h2v3h-2zM433 317h2v38h-2zM434 317h2v3h-2zM435 304h2v16h-2zM436 315h2v2h-2zM437 316h2v2h-2zM438 316h2v2h-2zM439 307h2v48h-2zM440 316h2v2h-2zM441 317h2v2h-2zM442 315h2v2h-2zM443 259h2v96h-2zM444 314h2v2h-2zM445 315h2v2h-2zM446 315h2v2h-2zM447 314h2v2h-2zM448 315h2v40h-2zM449 281h2v34h-2zM450 312h2v2h-2zM451 312h2v43h-2zM452 282h2v32h-2zM453 310h2v2h-2zM454 310h2v2h-2zM455 309h2v2h-2zM456 309h2v3h-2zM457 311h2v2h-2zM458 312h2v2h-2zM459 307h2v8h-2zM460 308h2v7h-2zM461 314h2v2h-2zM462 312h2v4h-2zM463 313h2v2h-2zM464 313h2v2h-2zM465 313h2v2h-2zM466 312h2v2h-2zM467 301h2v12h-2zM468 311h2v44h-2zM469 290h2v24h-2zM470 312h2v2h-2zM471 312h2v3h-2zM472 314h2v2h-2zM473 312h2v3h-2zM474 312h2v4h-2zM475 315h2v2h-2zM476 315h2v3h-2zM477 315h2v3h-2zM478 292h2v63h-2zM479 315h2v2h-2zM480 309h2v6h-2zM481 314h2v2h-2zM482 308h2v47h-2zM483 279h2v39h-2zM484 314h2v4h-2zM485 313h2v2h-2zM486 312h2v2h-2zM487 311h2v2h-2zM488 311h2v2h-2zM489 312h2v2h-2zM490 313h2v5h-2zM491 317h2v38h-2zM492 317h2v2h-2zM493 316h2v2h-2zM494 315h2v2h-2zM495 314h2v2h-2zM496 314h2v2h-2zM497 314h2v2h-2zM498 313h2v2h-2zM499 313h2v2h-2zM500 296h2v59h-2zM501 315h2v2h-2zM502 307h2v8h-2zM503 312h2v2h-2zM504 312h2v3h-2zM505 311h2v4h-2zM506 313h2v2h-2zM507 314h2v2h-2zM508 315h2v2h-2zM509 307h2v48h-2zM510 314h2v2h-2zM511 307h2v7h-2zM512 313h2v2h-2zM513 314h2v3h-2zM514 314h2v3h-2zM515 313h2v2h-2zM516 314h2v2h-2z"/>
<path fill="#c0c0c0" d="M516 223h1v132h-1z"/>
</svg>
<!-- stats group boxes -->
<div class="sb" style="left:18px;top:375px;width:170px;height:62px"></div>
<div class="wh" style="left:26px;top:368px;width:62px;height:13px"></div>
<div class="a" style="left:28px;top:371px;width:8px;height:8px;box-sizing:border-box;border:1px solid #000;background:#00ffff"></div>
<div class="sb" style="left:198px;top:375px;width:170px;height:62px"></div>
<div class="wh" style="left:206px;top:368px;width:72px;height:13px"></div>
<div class="a" style="left:208px;top:371px;width:8px;height:8px;box-sizing:border-box;border:1px solid #000;background:#ffff00"></div>
<div class="sb" style="left:379px;top:375px;width:170px;height:46px"></div>
<div class="wh" style="left:387px;top:368px;width:43px;height:13px"></div>
<div class="a" style="left:389px;top:371px;width:8px;height:8px;box-sizing:border-box;border:1px solid #000;background:#ff00ff"></div>
<!-- right panel -->
<div class="btn" style="left:562px;top:59px;width:68px;height:19px"></div>
<div class="btn" style="left:654px;top:59px;width:68px;height:19px"></div>
<div class="a" style="left:656px;top:61px;width:64px;height:15px;box-sizing:border-box;border:1px dotted #000;border-top-color:#a00000;border-bottom-color:#909000"></div>
<div class="gb" style="left:561px;top:89px;width:163px;height:68px"></div>
<div class="wh" style="left:568px;top:82px;width:62px;height:12px"></div>
<div class="gb" style="left:561px;top:161px;width:163px;height:179px"></div>
<div class="wh" style="left:567px;top:155px;width:46px;height:12px"></div>
<div class="gb" style="left:561px;top:344px;width:163px;height:24px"></div>
<div class="gb" style="left:561px;top:374px;width:163px;height:63px"></div>
<!-- combo + inputs -->
<div class="inp" style="left:631px;top:170px;width:82px;height:20px"></div>
<div class="a" style="left:695px;top:171px;width:17px;height:18px;box-sizing:border-box;border:1px solid #808080;border-radius:2px;background:linear-gradient(#fff 0,#fff 7px,#c0c0c0 7px)"></div>
<svg class="a" style="left:695px;top:171px" width="17" height="18" viewBox="0 0 17 18"><path d="M5 7 L8.5 10.5 L12 7" fill="none" stroke="#000" stroke-width="2"/></svg>
<div class="inp" style="left:631px;top:194px;width:70px;height:18px"></div>
<div class="inp" style="left:631px;top:218px;width:70px;height:17px"></div>
<!-- checkboxes -->
<div class="cb" style="left:569px;top:242px"></div>
<div class="cb" style="left:569px;top:261px"></div>
<div class="cb" style="left:569px;top:276px"></div>
<div class="cb" style="left:569px;top:291px"></div>
<div class="cb" style="left:569px;top:306px;background:linear-gradient(135deg,#b0b0b0 0,#b0b0b0 36%,rgba(255,255,255,0) 37%),linear-gradient(225deg,#fff 0,#fff 62%,#ffff00 63%)"></div>
<div class="cb" style="left:569px;top:321px"></div>
<svg class="a" style="left:569px;top:261px" width="13" height="73" viewBox="0 0 13 73"><g fill="none" stroke="#008000" stroke-width="2"><path d="M3 6 L5.5 8.5 L10 4"/><path d="M3 21 L5.5 23.5 L10 19"/><path d="M3 36 L5.5 38.5 L10 34"/><path d="M3 51 L5.5 53.5 L10 49"/><path d="M3 66 L5.5 68.5 L10 64"/></g></svg>
<span class="t" id="t0" style="top:9.0px;color:#000;font-weight:bold;font-size:13px;left:7.0px;transform-origin:0 50%;transform:scaleX(0.937);">CD</span>
<span class="t" id="t1" style="top:9.0px;color:#000;font-weight:bold;font-size:13px;left:32.0px;transform-origin:0 50%;transform:scaleX(0.948);">Speed</span>
<span class="t" id="t2" style="top:9.0px;color:#000;font-weight:bold;font-size:13px;left:75.5px;transform-origin:0 50%;transform:scaleX(0.576);">:</span>
<span class="t" id="t3" style="top:9.0px;color:#000;font-weight:bold;font-size:13px;left:84.0px;transform-origin:0 50%;transform:scaleX(1.045);">Disc</span>
<span class="t" id="t4" style="top:9.0px;color:#000;font-weight:bold;font-size:13px;left:117.0px;transform-origin:0 50%;transform:scaleX(0.994);">Quality</span>
<span class="t" id="t5" style="top:9.0px;color:#000;font-weight:bold;font-size:13px;left:168.0px;transform-origin:0 50%;transform:scaleX(1.048);">Test</span>
<span class="t" id="t6" style="top:9.0px;color:#000;font-weight:bold;font-size:13px;left:203.6px;transform-origin:0 50%;transform:scaleX(1.473);">-</span>
<span class="t" id="t7" style="top:9.0px;color:#000;font-weight:bold;font-size:13px;left:217.0px;transform-origin:0 50%;transform:scaleX(0.902);">BENQ</span>
<span class="t" id="t8" style="top:9.0px;color:#000;font-weight:bold;font-size:13px;left:272.0px;transform-origin:0 50%;transform:scaleX(0.947);">DVD</span>
<span class="t" id="t9" style="top:9.0px;color:#000;font-weight:bold;font-size:13px;left:304.7px;transform-origin:0 50%;transform:scaleX(0.857);">DD</span>
<span class="t" id="t10" style="top:9.0px;color:#000;font-weight:bold;font-size:13px;left:327.6px;transform-origin:0 50%;transform:scaleX(0.985);">DW1620</span>
<span class="t" id="t11" style="top:9.0px;color:#000;font-weight:bold;font-size:13px;left:400.0px;transform-origin:0 50%;transform:scaleX(0.959);">B7V9</span>
<span class="t" id="t12" style="top:38.2px;color:#000;left:22.5px;transform-origin:0 50%;transform:scaleX(0.961);">Disc Quality</span>
<span class="t" id="t13" style="top:57.2px;color:#000;left:293.5px;transform-origin:0 50%;transform:scaleX(0.957);">recorded with TEAC</span>
<span class="t" id="t14" style="top:57.2px;color:#000;left:413.7px;transform-origin:0 50%;transform:scaleX(0.903);">DV-W516E</span>
<span class="t" id="t15" style="top:57.2px;color:#000;left:505.3px;transform-origin:0 50%;transform:scaleX(0.858);">v1.05</span>
<span class="t" id="t16" style="top:65.7px;color:#000;right:688.5px;transform-origin:100% 50%;transform:scaleX(0.900);">100</span>
<span class="t" id="t17" style="top:92.7px;color:#000;right:688.5px;transform-origin:100% 50%;transform:scaleX(0.900);">80</span>
<span class="t" id="t18" style="top:118.7px;color:#000;right:688.5px;transform-origin:100% 50%;transform:scaleX(0.900);">60</span>
<span class="t" id="t19" style="top:144.7px;color:#000;right:688.5px;transform-origin:100% 50%;transform:scaleX(0.900);">40</span>
<span class="t" id="t20" style="top:170.7px;color:#000;right:688.5px;transform-origin:100% 50%;transform:scaleX(0.900);">20</span>
<span class="t" id="t21" style="top:180.8px;color:#000;left:533.3px;transform-origin:0 50%;transform:scaleX(0.900);">2</span>
<span class="t" id="t22" style="top:164.8px;color:#000;left:533.3px;transform-origin:0 50%;transform:scaleX(0.900);">4</span>
<span class="t" id="t23" style="top:147.8px;color:#000;left:533.3px;transform-origin:0 50%;transform:scaleX(0.900);">6</span>
<span class="t" id="t24" style="top:131.8px;color:#000;left:533.3px;transform-origin:0 50%;transform:scaleX(0.900);">8</span>
<span class="t" id="t25" style="top:115.8px;color:#000;left:533.3px;transform-origin:0 50%;transform:scaleX(0.900);">10</span>
<span class="t" id="t26" style="top:98.8px;color:#000;left:533.3px;transform-origin:0 50%;transform:scaleX(0.900);">12</span>
<span class="t" id="t27" style="top:82.8px;color:#000;left:533.3px;transform-origin:0 50%;transform:scaleX(0.900);">14</span>
<span class="t" id="t28" style="top:66.8px;color:#000;left:533.3px;transform-origin:0 50%;transform:scaleX(0.900);">16</span>
<span class="t" id="t29" style="top:206.0px;color:#000;left:-36.5px;width:200px;text-align:center;transform-origin:50% 50%;transform:scaleX(0.803);"><span id="m29">0.0</span></span>
<span class="t" id="t30" style="top:356.0px;color:#000;left:-36.5px;width:200px;text-align:center;transform-origin:50% 50%;transform:scaleX(0.803);"><span id="m30">0.0</span></span>
<span class="t" id="t31" style="top:206.0px;color:#000;left:15.4px;width:200px;text-align:center;transform-origin:50% 50%;transform:scaleX(0.803);"><span id="m31">0.5</span></span>
<span class="t" id="t32" style="top:356.0px;color:#000;left:15.4px;width:200px;text-align:center;transform-origin:50% 50%;transform:scaleX(0.803);"><span id="m32">0.5</span></span>
<span class="t" id="t33" style="top:206.0px;color:#000;left:67.3px;width:200px;text-align:center;transform-origin:50% 50%;transform:scaleX(0.803);"><span id="m33">1.0</span></span>
<span class="t" id="t34" style="top:356.0px;color:#000;left:67.3px;width:200px;text-align:center;transform-origin:50% 50%;transform:scaleX(0.803);"><span id="m34">1.0</span></span>
<span class="t" id="t35" style="top:206.0px;color:#000;left:119.2px;width:200px;text-align:center;transform-origin:50% 50%;transform:scaleX(0.803);"><span id="m35">1.5</span></span>
<span class="t" id="t36" style="top:356.0px;color:#000;left:119.2px;width:200px;text-align:center;transform-origin:50% 50%;transform:scaleX(0.803);"><span id="m36">1.5</span></span>
<span class="t" id="t37" style="top:206.0px;color:#000;left:171.1px;width:200px;text-align:center;transform-origin:50% 50%;transform:scaleX(0.803);"><span id="m37">2.0</span></span>
<span class="t" id="t38" style="top:356.0px;color:#000;left:171.1px;width:200px;text-align:center;transform-origin:50% 50%;transform:scaleX(0.803);"><span id="m38">2.0</span></span>
<span class="t" id="t39" style="top:206.0px;color:#000;left:223.0px;width:200px;text-align:center;transform-origin:50% 50%;transform:scaleX(0.803);"><span id="m39">2.5</span></span>
<span class="t" id="t40" style="top:356.0px;color:#000;left:223.0px;width:200px;text-align:center;transform-origin:50% 50%;transform:scaleX(0.803);"><span id="m40">2.5</span></span>
<span class="t" id="t41" style="top:206.0px;color:#000;left:274.9px;width:200px;text-align:center;transform-origin:50% 50%;transform:scaleX(0.803);"><span id="m41">3.0</span></span>
<span class="t" id="t42" style="top:356.0px;color:#000;left:274.9px;width:200px;text-align:center;transform-origin:50% 50%;transform:scaleX(0.803);"><span id="m42">3.0</span></span>
<span class="t" id="t43" style="top:206.0px;color:#000;left:326.8px;width:200px;text-align:center;transform-origin:50% 50%;transform:scaleX(0.803);"><span id="m43">3.5</span></span>
<span class="t" id="t44" style="top:356.0px;color:#000;left:326.8px;width:200px;text-align:center;transform-origin:50% 50%;transform:scaleX(0.803);"><span id="m44">3.5</span></span>
<span class="t" id="t45" style="top:206.0px;color:#000;left:378.7px;width:200px;text-align:center;transform-origin:50% 50%;transform:scaleX(0.803);"><span id="m45">4.0</span></span>
<span class="t" id="t46" style="top:356.0px;color:#000;left:378.7px;width:200px;text-align:center;transform-origin:50% 50%;transform:scaleX(0.803);"><span id="m46">4.0</span></span>
<span class="t" id="t47" style="top:206.0px;color:#000;left:430.6px;width:200px;text-align:center;transform-origin:50% 50%;transform:scaleX(0.803);"><span id="m47">4.5</span></span>
<span class="t" id="t48" style="top:356.0px;color:#000;left:430.6px;width:200px;text-align:center;transform-origin:50% 50%;transform:scaleX(0.803);"><span id="m48">4.5</span></span>
<span class="t" id="t49" style="top:215.5px;color:#000;right:688.5px;transform-origin:100% 50%;transform:scaleX(0.900);">200</span>
<span class="t" id="t50" style="top:242.5px;color:#000;right:688.5px;transform-origin:100% 50%;transform:scaleX(0.900);">160</span>
<span class="t" id="t51" style="top:268.5px;color:#000;right:688.5px;transform-origin:100% 50%;transform:scaleX(0.900);">120</span>
<span class="t" id="t52" style="top:294.5px;color:#000;right:688.5px;transform-origin:100% 50%;transform:scaleX(0.900);">80</span>
<span class="t" id="t53" style="top:320.5px;color:#000;right:688.5px;transform-origin:100% 50%;transform:scaleX(0.900);">40</span>
<span class="t" id="t54" style="top:215.5px;color:#000;left:533.0px;transform-origin:0 50%;transform:scaleX(0.900);">40</span>
<span class="t" id="t55" style="top:242.5px;color:#000;left:533.0px;transform-origin:0 50%;transform:scaleX(0.900);">32</span>
<span class="t" id="t56" style="top:268.5px;color:#000;left:533.0px;transform-origin:0 50%;transform:scaleX(0.900);">24</span>
<span class="t" id="t57" style="top:294.5px;color:#000;left:533.0px;transform-origin:0 50%;transform:scaleX(0.900);">16</span>
<span class="t" id="t58" style="top:320.5px;color:#000;left:533.0px;transform-origin:0 50%;transform:scaleX(0.900);">8</span>
<span class="t" id="t59" style="top:367.3px;color:#000;left:40.7px;transform-origin:0 50%;transform:scaleX(0.915);">PI Errors</span>
<span class="t" id="t60" style="top:381.0px;color:#000;left:26.6px;transform-origin:0 50%;transform:scaleX(0.920);">平均:</span>
<span class="t" id="t61" style="top:400.0px;color:#000;left:26.6px;transform-origin:0 50%;transform:scaleX(0.920);">最大:</span>
<span class="t" id="t62" style="top:417.6px;color:#000;left:26.6px;transform-origin:0 50%;transform:scaleX(0.920);">合計 :</span>
<span class="t" id="t63" style="top:381.0px;color:#000080;right:569.3px;transform-origin:100% 50%;transform:scaleX(0.809);">29.51</span>
<span class="t" id="t64" style="top:400.0px;color:#000080;right:569.8px;transform-origin:100% 50%;transform:scaleX(0.900);">81</span>
<span class="t" id="t65" style="top:417.6px;color:#000080;right:568.0px;transform-origin:100% 50%;transform:scaleX(0.874);">282808</span>
<span class="t" id="t66" style="top:367.3px;color:#000;left:220.7px;transform-origin:0 50%;transform:scaleX(0.927);">PI Failures</span>
<span class="t" id="t67" style="top:381.0px;color:#000;left:208.0px;transform-origin:0 50%;transform:scaleX(0.920);">平均:</span>
<span class="t" id="t68" style="top:400.0px;color:#000;left:208.0px;transform-origin:0 50%;transform:scaleX(0.920);">最大:</span>
<span class="t" id="t69" style="top:417.6px;color:#000;left:208.0px;transform-origin:0 50%;transform:scaleX(0.920);">合計 :</span>
<span class="t" id="t70" style="top:381.0px;color:#000080;right:385.5px;transform-origin:100% 50%;transform:scaleX(0.900);">16.62</span>
<span class="t" id="t71" style="top:400.0px;color:#000080;right:386.5px;transform-origin:100% 50%;transform:scaleX(0.900);">154</span>
<span class="t" id="t72" style="top:417.6px;color:#000080;right:385.5px;transform-origin:100% 50%;transform:scaleX(0.900);">124934</span>
<span class="t" id="t73" style="top:367.3px;color:#000;left:402.0px;transform-origin:0 50%;transform:scaleX(1.011);">Jitter</span>
<span class="t" id="t74" style="top:381.0px;color:#000;left:389.0px;transform-origin:0 50%;transform:scaleX(0.920);">平均:</span>
<span class="t" id="t75" style="top:400.0px;color:#000;left:389.0px;transform-origin:0 50%;transform:scaleX(0.920);">最大:</span>
<span class="t" id="t76" style="top:381.0px;color:#000080;right:204.7px;transform-origin:100% 50%;transform:scaleX(0.900);">5.83 %</span>
<span class="t" id="t77" style="top:400.0px;color:#000080;right:204.7px;transform-origin:100% 50%;transform:scaleX(0.900);">28.8 %</span>
<span class="t" id="t78" style="top:423.0px;color:#000;left:390.0px;transform-origin:0 50%;transform:scaleX(0.907);">PO Failures:</span>
<span class="t" id="t79" style="top:423.0px;color:#000080;right:205.5px;transform-origin:100% 50%;transform:scaleX(0.900);">61473</span>
<span class="t" id="t80" style="top:61.0px;color:#000;left:496.0px;width:200px;text-align:center;transform-origin:50% 50%;transform:scaleX(0.958);"><span id="m80">開始</span></span>
<span class="t" id="t81" style="top:61.0px;color:#000;left:587.0px;width:200px;text-align:center;transform-origin:50% 50%;transform:scaleX(0.950);"><span id="m81">終了(<u>X</u>)</span></span>
<span class="t" id="t82" style="top:80.3px;color:#0000ff;left:569.5px;transform-origin:0 50%;transform:scaleX(0.719);">ディスク</span>
<span class="t" id="t83" style="top:80.3px;color:#0000ff;left:604.0px;transform-origin:0 50%;transform:scaleX(1.000);">情報</span>
<span class="t" id="t84" style="top:93.8px;color:#000;left:568.0px;transform-origin:0 50%;transform:scaleX(0.727);">タイプ:</span>
<span class="t" id="t85" style="top:93.8px;color:#000080;left:616.8px;transform-origin:0 50%;transform:scaleX(1.005);">DVD-R</span>
<span class="t" id="t86" style="top:108.5px;color:#000;left:568.0px;transform-origin:0 50%;transform:scaleX(0.900);">ID:</span>
<span class="t" id="t87" style="top:123.3px;color:#000;left:568.0px;transform-origin:0 50%;transform:scaleX(0.920);">日付:</span>
<span class="t" id="t88" style="top:123.3px;color:#000080;left:616.8px;transform-origin:0 50%;transform:scaleX(0.959);">8 July 2005</span>
<span class="t" id="t89" style="top:138.6px;color:#000;left:568.0px;transform-origin:0 50%;transform:scaleX(0.900);">Label:</span>
<span class="t" id="t90" style="top:138.6px;color:#000080;left:616.8px;transform-origin:0 50%;transform:scaleX(0.859);">CDS_TEST_B2</span>
<span class="t" id="t91" style="top:154.3px;color:#0000ff;left:569.4px;transform-origin:0 50%;transform:scaleX(0.964);">Settings</span>
<span class="t" id="t92" style="top:172.2px;color:#000;left:568.0px;transform-origin:0 50%;transform:scaleX(1.000);">転送速度</span>
<span class="t" id="t93" style="top:172.5px;color:#000;left:634.0px;transform-origin:0 50%;transform:scaleX(1.027);">6 X</span>
<span class="t" id="t94" style="top:197.5px;color:#000;left:568.0px;transform-origin:0 50%;transform:scaleX(0.933);">開始</span>
<span class="t" id="t95" style="top:195.7px;color:#000;left:634.0px;transform-origin:0 50%;transform:scaleX(0.922);">0000 MB</span>
<span class="t" id="t96" style="top:220.3px;color:#000;left:568.0px;transform-origin:0 50%;transform:scaleX(1.000);">終了位置</span>
<span class="t" id="t97" style="top:219.0px;color:#000;left:634.0px;transform-origin:0 50%;transform:scaleX(0.922);">4489 MB</span>
<span class="t" id="t98" style="top:241.7px;color:#000;left:585.0px;transform-origin:0 50%;transform:scaleX(0.932);">Quick Scan</span>
<span class="t" id="t99" style="top:261.0px;color:#000;left:585.0px;transform-origin:0 50%;transform:scaleX(0.944);">Show C1/PIE</span>
<span class="t" id="t100" style="top:276.0px;color:#000;left:585.0px;transform-origin:0 50%;transform:scaleX(0.953);">Show C2/PIF</span>
<span class="t" id="t101" style="top:291.0px;color:#000;left:585.0px;transform-origin:0 50%;transform:scaleX(0.977);">Show Jitter</span>
<span class="t" id="t102" style="top:305.8px;color:#000;left:585.0px;transform-origin:0 50%;transform:scaleX(0.909);">Show Read Speed</span>
<span class="t" id="t103" style="top:320.7px;color:#000;left:585.0px;transform-origin:0 50%;transform:scaleX(0.918);">Show Write Speed</span>
<span class="t" id="t104" style="top:348.7px;color:#000;left:568.8px;transform-origin:0 50%;transform:scaleX(1.000);">品質</span>
<span class="t" id="t105" style="top:348.7px;color:#000;left:593.0px;transform-origin:0 50%;transform:scaleX(0.686);">スコア:</span>
<span class="t" id="t106" style="top:348.7px;color:#000080;right:36.3px;transform-origin:100% 50%;transform:scaleX(0.900);">0</span>
<span class="t" id="t107" style="top:380.0px;color:#000;left:568.8px;transform-origin:0 50%;transform:scaleX(0.972);">進行状況:</span>
<span class="t" id="t108" style="top:380.0px;color:#000080;right:34.7px;transform-origin:100% 50%;transform:scaleX(0.900);">100 %</span>
<span class="t" id="t109" style="top:400.0px;color:#000;left:568.8px;transform-origin:0 50%;transform:scaleX(0.737);">ポジション:</span>
<span class="t" id="t110" style="top:400.0px;color:#000080;right:36.3px;transform-origin:100% 50%;transform:scaleX(0.900);">4488 MB</span>
<span class="t" id="t111" style="top:417.2px;color:#000;left:568.8px;transform-origin:0 50%;transform:scaleX(0.933);">速度:</span>
<span class="t" id="t112" style="top:417.2px;color:#000080;right:35.0px;transform-origin:100% 50%;transform:scaleX(0.900);">7.18 X</span>
</body></html>
